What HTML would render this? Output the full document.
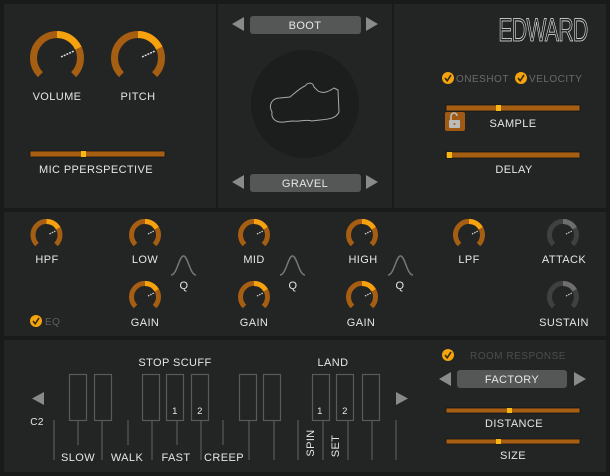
<!DOCTYPE html>
<html><head><meta charset="utf-8"><style>
html,body{margin:0;padding:0;background:#191a1a;width:610px;height:476px;overflow:hidden}
svg{display:block}
text{font-family:"Liberation Sans",sans-serif;font-weight:normal;fill:#e6e6e6;font-size:11px;letter-spacing:0.4px;text-anchor:middle}
.g{fill:#6a6a6a;font-weight:normal;text-anchor:start;letter-spacing:0.5px}
</style></head><body>
<svg width="610" height="476" viewBox="0 0 610 476">
<defs>
<g id="kb">
<path d="M-16.6,16.6 A23.5,23.5 0 1 1 16.6,16.6" stroke="#a65e12" stroke-width="7" fill="none"/>
<path d="M0,-23.5 A23.5,23.5 0 0 1 21.3,-9.9" stroke="#f6a20e" stroke-width="7" fill="none"/>
<line x1="4" y1="-1" x2="17" y2="-7" stroke="#ddd" stroke-width="1.5" stroke-dasharray="2 1"/>
</g>
<g id="ks">
<path d="M-9.5,9.5 A13.5,13.5 0 1 1 9.5,9.5" stroke="#a65e12" stroke-width="5" fill="none"/>
<path d="M0,-13.5 A13.5,13.5 0 0 1 11.7,-6.75" stroke="#f6a20e" stroke-width="5" fill="none"/>
<line x1="3" y1="-1" x2="9" y2="-4" stroke="#ccc" stroke-width="1.3" stroke-dasharray="1.5 1"/>
</g>
<g id="kg">
<path d="M-9.5,9.5 A13.5,13.5 0 1 1 9.5,9.5" stroke="#3f4040" stroke-width="5" fill="none"/>
<path d="M0,-13.5 A13.5,13.5 0 0 1 11.7,-6.75" stroke="#6e6e6e" stroke-width="5" fill="none"/>
<line x1="3" y1="-1" x2="9" y2="-4" stroke="#bbb" stroke-width="1.3" stroke-dasharray="1.5 1"/>
</g>
<g id="chk"><circle r="6" fill="#f3a40f"/><path d="M-3,0 L-0.8,2.8 L3,-3" stroke="#3a2a08" stroke-width="1.6" fill="none"/></g>
<path id="bell" d="M0,19 C6,19 8,0 12.5,0 C17,0 19,19 25,19" stroke="#777" stroke-width="1.5" fill="none"/>
</defs>
<rect x="4" y="4" width="212" height="204" fill="#232424"/>
<rect x="218" y="4" width="174" height="204" fill="#232424"/>
<rect x="394" y="4" width="212" height="204" fill="#232424"/>
<rect x="4" y="212" width="602" height="124" fill="#232424"/>
<rect x="4" y="340" width="602" height="132" fill="#232424"/>

<use href="#kb" x="57" y="58"/>
<use href="#kb" x="138" y="58"/>
<text x="57" y="100">VOLUME</text>
<text x="138" y="100">PITCH</text>
<rect x="30" y="151" width="135" height="6" fill="#a65e12" stroke="#151515" stroke-width="0.8"/>
<rect x="81" y="151" width="5" height="6" fill="#f8b614"/>
<text x="96" y="173">MIC PPERSPECTIVE</text>

<polygon points="244,17 244,31 232,24" fill="#8a8a8a"/>
<rect x="250" y="16" width="111" height="18" rx="3" fill="#555656"/>
<text x="305" y="29">BOOT</text>
<polygon points="366,17 366,31 378,24" fill="#8a8a8a"/>
<circle cx="305" cy="104" r="54" fill="#1c1d1d"/>
<path d="M272,112 C268,105 272,98 280,98 L290,97 C296,92 300,88 305,86 C308,82 313,82 314,87 L318,91 C323,94 328,92 334,88 L338,90 L339,112 C335,121 322,119 312,121 C305,119 300,122 292,121 L284,122 C275,123 271,118 272,112 Z" stroke="#aaa" stroke-width="1" fill="none"/>
<polygon points="244,175 244,189 232,182" fill="#8a8a8a"/>
<rect x="250" y="174" width="111" height="18" rx="3" fill="#555656"/>
<text x="305" y="187">GRAVEL</text>
<polygon points="366,175 366,189 378,182" fill="#8a8a8a"/>

<text x="543" y="41" style="font-size:32px;font-weight:normal;fill:none;stroke:#e8e8e8;stroke-width:0.8;letter-spacing:-1px" transform="translate(543 0) scale(0.66 1) translate(-543 0)">EDWARD</text>
<use href="#chk" x="448" y="78"/>
<text class="g" x="456" y="82" style="font-size:10px">ONESHOT</text>
<use href="#chk" x="521" y="78"/>
<text class="g" x="529" y="82" style="font-size:10px">VELOCITY</text>
<rect x="446" y="105" width="134" height="6" fill="#a65e12" stroke="#151515" stroke-width="0.8"/>
<rect x="496" y="105" width="5" height="6" fill="#f8b614"/>
<rect x="445" y="112" width="20" height="19" rx="2" fill="#a05a14"/>
<rect x="449" y="120" width="11" height="8" fill="#bbb" rx="1"/>
<path d="M451,120 V116 A3,3 0 0 1 457,116" stroke="#bbb" stroke-width="1.6" fill="none"/>
<circle cx="454.5" cy="124" r="1" fill="#a05a14"/>
<text x="513" y="127">SAMPLE</text>
<rect x="446" y="152" width="134" height="6" fill="#a65e12" stroke="#151515" stroke-width="0.8"/>
<rect x="447" y="152" width="5" height="6" fill="#f8b614"/>
<text x="514" y="173">DELAY</text>

<use href="#ks" x="46.5" y="235"/>
<use href="#ks" x="145" y="235"/>
<use href="#ks" x="254" y="235"/>
<use href="#ks" x="362" y="235"/>
<use href="#ks" x="469" y="235"/>
<use href="#kg" x="563" y="235"/>
<use href="#ks" x="145" y="297"/>
<use href="#ks" x="254" y="297"/>
<use href="#ks" x="362" y="297"/>
<use href="#kg" x="563" y="297"/>
<text x="47" y="263">HPF</text>
<text x="145" y="263">LOW</text>
<text x="254" y="263">MID</text>
<text x="363" y="263">HIGH</text>
<text x="469" y="263">LPF</text>
<text x="564" y="263">ATTACK</text>
<text x="145" y="326">GAIN</text>
<text x="254" y="326">GAIN</text>
<text x="361" y="326">GAIN</text>
<text x="564" y="326">SUSTAIN</text>
<use href="#bell" x="171" y="256"/>
<use href="#bell" x="280" y="256"/>
<use href="#bell" x="388" y="256"/>
<text x="184" y="289">Q</text>
<text x="293" y="289">Q</text>
<text x="400" y="289">Q</text>
<use href="#chk" x="36" y="321"/>
<text class="g" x="45" y="325" style="font-size:10px;fill:#5d5d5d">EQ</text>

<g stroke="#5a5a5a" stroke-width="1.2" fill="none">
<rect x="69.5" y="374.5" width="17" height="46"/>
<rect x="94.5" y="374.5" width="17" height="46"/>
<rect x="142.5" y="374.5" width="17" height="46"/>
<rect x="166.5" y="374.5" width="17" height="46"/>
<rect x="191.5" y="374.5" width="17" height="46"/>
<rect x="239.5" y="374.5" width="17" height="46"/>
<rect x="263.5" y="374.5" width="17" height="46"/>
<rect x="312.5" y="374.5" width="17" height="46"/>
<rect x="336.5" y="374.5" width="17" height="46"/>
<rect x="362.5" y="374.5" width="17" height="46"/>
</g>
<g stroke="#5a5a5a" stroke-width="1.2">
<line x1="54" y1="420" x2="54" y2="460"/>
<line x1="78" y1="421" x2="78" y2="445"/>
<line x1="102" y1="421" x2="102" y2="460"/>
<line x1="128" y1="420" x2="128" y2="445"/>
<line x1="152" y1="421" x2="152" y2="460"/>
<line x1="177" y1="421" x2="177" y2="445"/>
<line x1="201" y1="421" x2="201" y2="460"/>
<line x1="223" y1="420" x2="223" y2="445"/>
<line x1="249" y1="421" x2="249" y2="460"/>
<line x1="274" y1="421" x2="274" y2="460"/>
<line x1="298" y1="420" x2="298" y2="460"/>
<line x1="323" y1="421" x2="323" y2="460"/>
<line x1="348" y1="421" x2="348" y2="460"/>
<line x1="372" y1="421" x2="372" y2="460"/>
<line x1="396" y1="420" x2="396" y2="460"/>
</g>
<polygon points="44,392 44,405 32,398.5" fill="#8a8a8a"/>
<polygon points="396,392 396,405 408,398.5" fill="#8a8a8a"/>
<text x="37" y="425" style="font-size:10px">C2</text>
<text x="175" y="366">STOP SCUFF</text>
<text x="333" y="366">LAND</text>
<text x="175" y="414" style="font-size:9.5px">1</text>
<text x="200" y="414" style="font-size:9.5px">2</text>
<text x="320" y="414" style="font-size:9.5px">1</text>
<text x="345" y="414" style="font-size:9.5px">2</text>
<text x="78" y="461">SLOW</text>
<text x="127" y="461">WALK</text>
<text x="176" y="461">FAST</text>
<text x="224" y="461">CREEP</text>
<text x="0" y="0" transform="translate(314 443) rotate(-90)">SPIN</text>
<text x="0" y="0" transform="translate(339 446) rotate(-90)">SET</text>

<use href="#chk" x="448" y="355"/>
<text class="g" x="470" y="359" style="font-size:10px;fill:#4d4d4d">ROOM RESPONSE</text>
<polygon points="451,372 451,386 439,379" fill="#8a8a8a"/>
<rect x="457" y="370" width="110" height="18" rx="3" fill="#555656"/>
<text x="512" y="383">FACTORY</text>
<polygon points="574,372 574,386 586,379" fill="#8a8a8a"/>
<rect x="446" y="408" width="134" height="5" fill="#a65e12" stroke="#151515" stroke-width="0.8"/>
<rect x="507" y="408" width="5" height="5" fill="#f8b614"/>
<text x="514" y="427">DISTANCE</text>
<rect x="446" y="439" width="134" height="5" fill="#a65e12" stroke="#151515" stroke-width="0.8"/>
<rect x="496" y="439" width="5" height="5" fill="#f8b614"/>
<text x="513" y="459">SIZE</text>
</svg>
</body></html>
